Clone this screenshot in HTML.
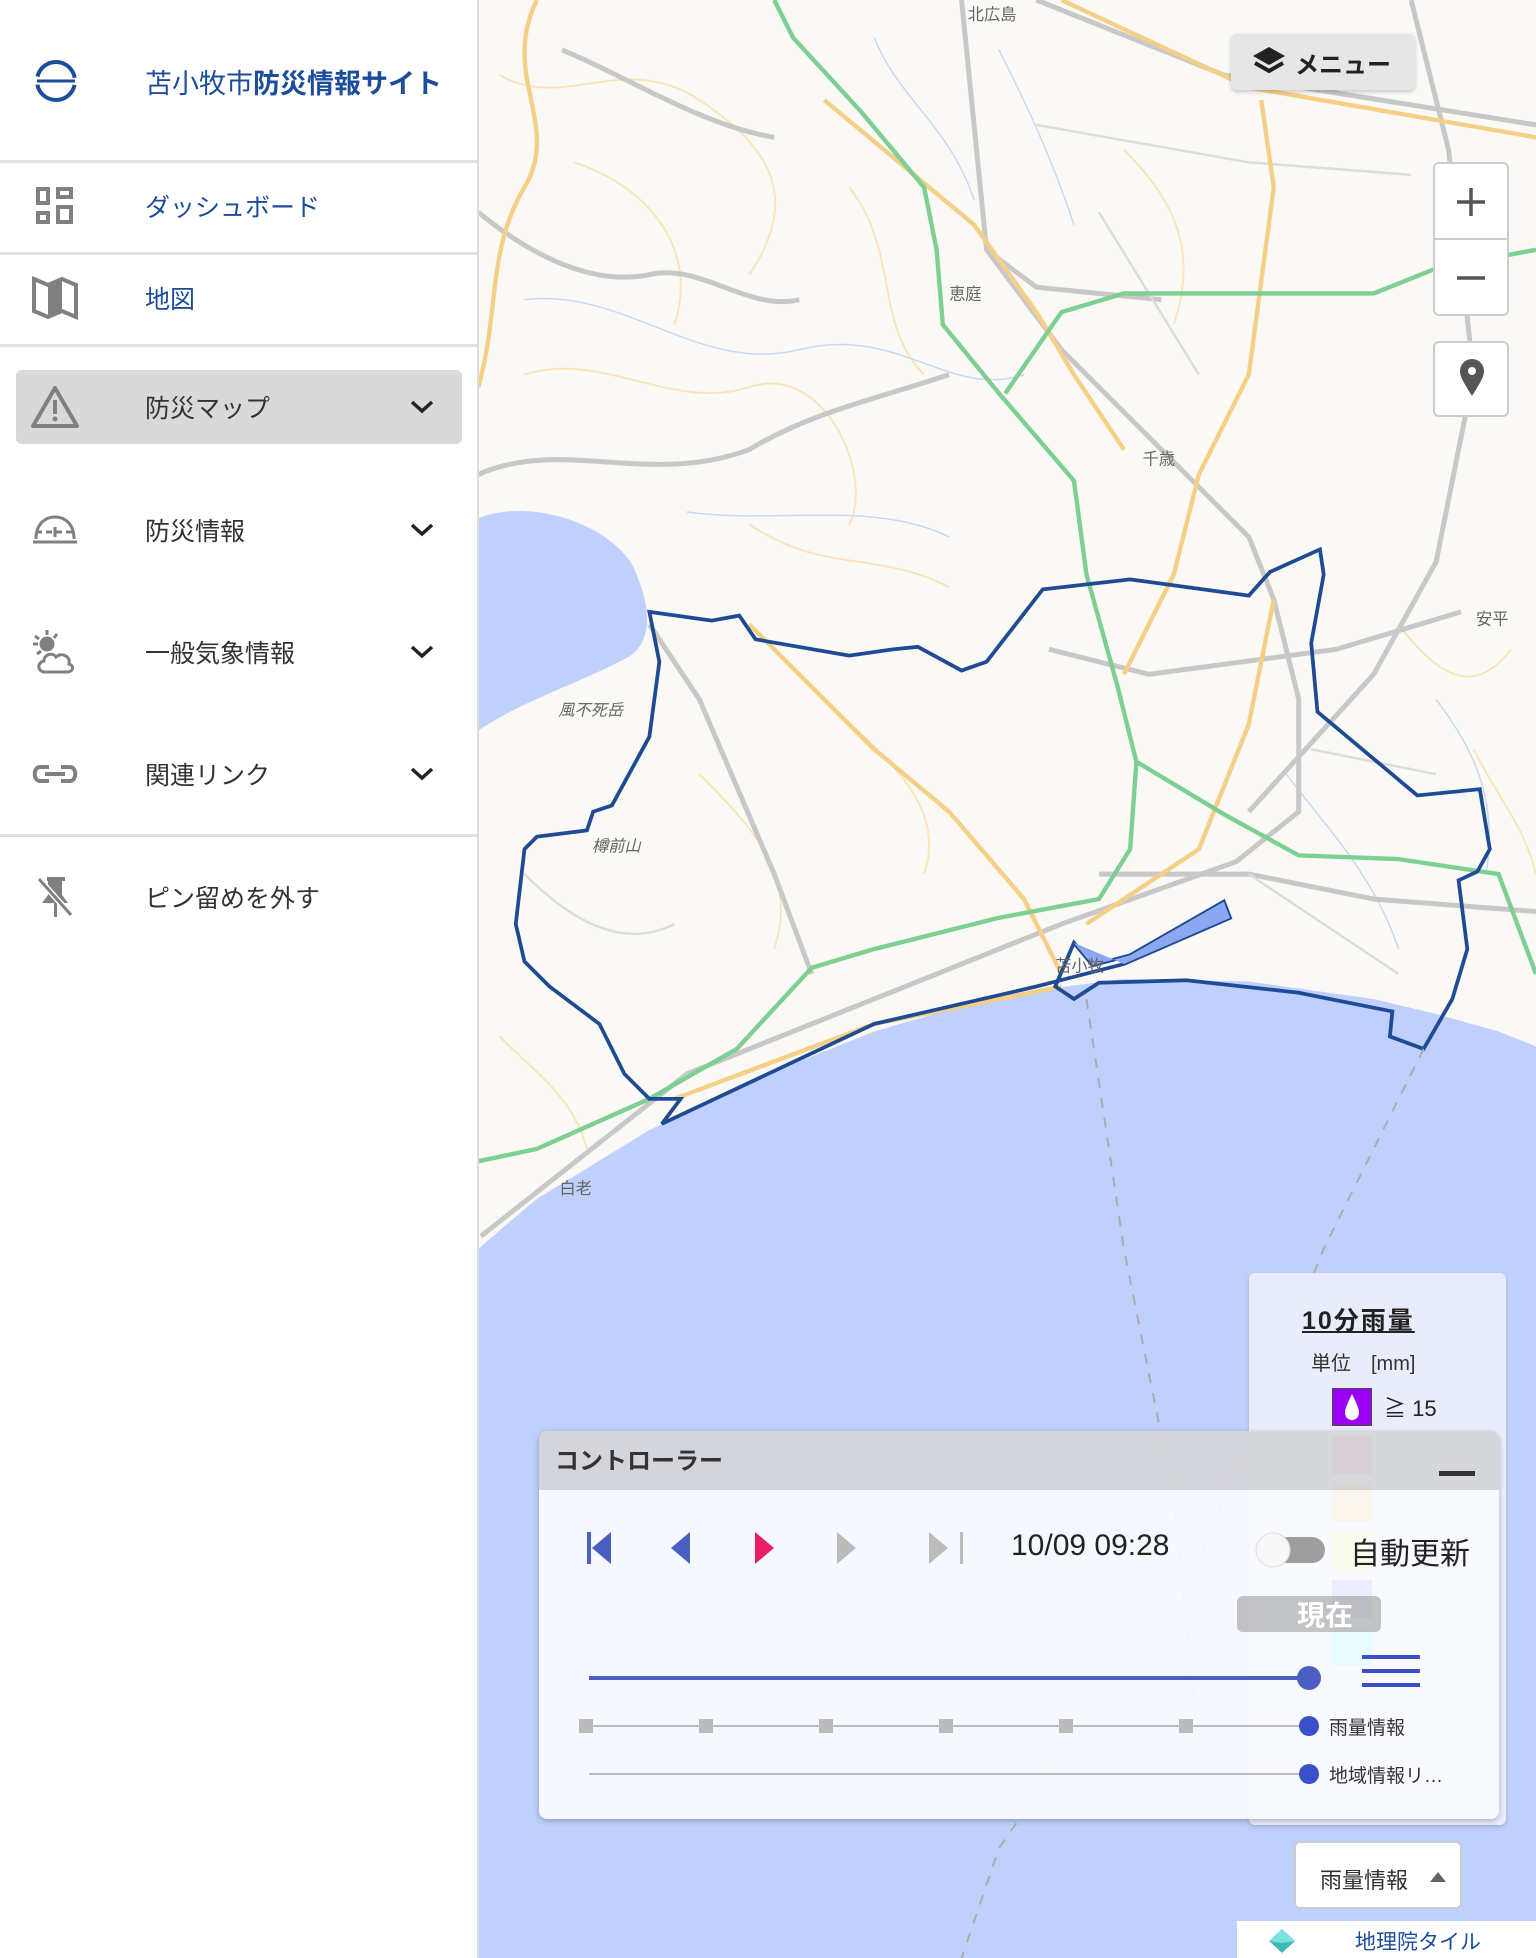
<!DOCTYPE html>
<html><head><meta charset="utf-8">
<style>
*{box-sizing:border-box;margin:0;padding:0}
body{width:1536px;height:1958px;overflow:hidden;position:relative;font-family:"Liberation Sans","Noto Sans CJK JP",sans-serif;background:#f8f7f2}
#map{position:absolute;left:0;top:0;width:1536px;height:1958px}
.side{position:absolute;left:0;top:0;width:479px;height:1958px;background:#fff;border-right:2px solid #ddd}
.hr{position:absolute;left:0;width:477px;height:3px;background:#e0e0e0}
.item{position:absolute;left:0;width:477px;height:60px;display:flex;align-items:center}
.item .ic{position:absolute;left:30px;width:50px;height:50px;display:flex;align-items:center;justify-content:center}
.item .tx{position:absolute;left:145px;font-size:25px;color:#333}
.item .chev{position:absolute;left:410px;top:22px}
.blue{color:#1c4c9c!important}
.btn{position:absolute;background:#fff;border:2px solid #ccc;border-radius:6px}
</style></head><body>
<svg id="map" viewBox="0 0 1230 1568" preserveAspectRatio="none">
<rect x="383" y="0" width="847" height="1568" fill="#faf9f5"/>
<g fill="none" stroke="#fbe3b4" stroke-width="1.5">
<path d="M400 60 C450 90 500 40 560 80 S640 160 600 220"/>
<path d="M420 300 C480 280 540 330 600 310 S700 380 680 420"/>
<path d="M560 620 C600 660 640 700 620 760"/>
<path d="M660 560 C700 600 760 640 740 700"/>
<path d="M400 830 C430 860 460 880 470 920"/>
<path d="M1120 500 C1150 540 1180 560 1210 520"/>
<path d="M1180 600 C1200 640 1220 660 1230 700"/>
<path d="M680 150 C720 200 700 260 740 300"/>
<path d="M460 130 C520 150 560 200 540 260"/>
<path d="M600 420 C660 460 700 440 760 470"/>
<path d="M900 120 C940 160 960 200 940 260"/>
</g>
<g fill="none" stroke="#c9d7f5" stroke-width="1.2">
<path d="M420 240 C500 230 560 300 640 280 S760 320 820 300"/>
<path d="M550 410 C620 420 700 400 760 430"/>
<path d="M700 30 C720 80 760 100 780 160"/>
<path d="M1150 560 C1180 600 1200 640 1190 700"/>
<path d="M800 40 C820 80 840 120 860 180"/>
<path d="M1030 620 C1060 660 1100 700 1120 760"/>
</g>
<path d="M383 415 C420 400 480 415 505 450 C520 480 525 510 505 525 C470 545 420 560 383 585 Z" fill="#bed0fb"/>
<path d="M383 1000 L430 960 L520 905 L610 862 L700 826 L800 797 L900 784 L1000 786 L1100 800 L1150 812 L1200 826 L1230 838 L1230 1568 L383 1568 Z" fill="#bed0fb"/>
<g fill="none" stroke="#c8c8c8" stroke-width="4">
<path d="M770 0 L790 200 L850 280 L920 350 L1000 430 L1020 480 L1040 560 L1040 650 L990 690 L850 740 L700 800 L550 860 L385 990"/>
<path d="M1130 0 L1160 120 L1180 300 L1150 450 L1100 540 L1000 650"/>
<path d="M1170 490 L1070 520 L920 540 L840 520"/>
<path d="M520 500 L560 560 L620 700 L650 780"/>
<path d="M383 380 C450 350 520 390 600 360 C650 330 700 320 760 300"/>
<path d="M880 700 L1000 700 L1100 720 L1230 730"/>
<path d="M830 0 L980 60 L1230 100"/>
<path d="M450 40 C500 60 560 100 620 110"/>
<path d="M383 170 C420 200 470 230 520 220 C560 210 600 250 640 240"/>
<path d="M790 200 L830 230 L930 240"/>
</g>
<g fill="none" stroke="#dcdcdc" stroke-width="2">
<path d="M830 100 L1000 130 L1130 140"/>
<path d="M880 170 L960 300"/>
<path d="M1050 600 L1150 620"/>
<path d="M1000 700 L1120 780"/>
<path d="M420 700 C460 740 500 760 540 740"/>
</g>
<g fill="none" stroke="#f5cf86" stroke-width="3.5">
<path d="M383 310 C400 250 390 200 420 150 S400 60 430 0"/>
<path d="M600 500 L700 600 L760 650 L820 720 L850 780"/>
<path d="M1010 80 L1020 150 L1000 300 L960 380 L940 460 L900 540"/>
<path d="M850 0 L1000 70 L1230 110"/>
<path d="M660 80 L720 130 L780 180 L830 250 L860 300 L900 360"/>
<path d="M1020 480 L1000 580 L960 680 L870 740"/>
<path d="M540 880 L700 820 L850 790"/>
</g>
<g fill="none" stroke="#7dcf93" stroke-width="3.5">
<path d="M620 0 L635 30 L690 90 L740 150 L750 200 L755 260 L800 315 L860 385 L870 460 L895 550 L910 610 L905 680 L880 720 L800 735 L700 760 L650 775 L590 840 L520 880 L430 920 L383 930"/>
<path d="M805 315 L850 250 L900 235 L1000 235 L1100 235 L1150 215 L1230 200"/>
<path d="M910 610 L980 652 L1040 685 L1120 688 L1200 700 L1230 780"/>
</g>
<path d="M520 490 L570 497 L592 493 L605 512 L680 525 L715 520 L735 518 L770 537 L790 530 L835 472 L905 464 L1000 477 L1017 458 L1057 440 L1060 460 L1050 515 L1055 570 L1135 637 L1185 632 L1193 680 L1183 698 L1168 705 L1175 760 L1163 800 L1140 840 L1113 830 L1115 810 L1040 795 L950 785 L880 787 L860 800 L845 790 L860 755 L875 773 L905 765 L980 722 L985 735 L900 772 L830 790 L700 820 L530 900 L545 880 L520 880 L500 860 L480 820 L440 790 L420 770 L413 740 L420 680 L430 670 L470 665 L475 650 L490 645 L520 590 L528 530 Z" fill="none" stroke="#1f4a94" stroke-width="3"/>
<path d="M860 755 L875 773 L905 765 L980 722 L985 735 L900 772 Z" fill="#8ba8f0"/>
<g fill="none" stroke="#aaa" stroke-width="1.5" stroke-dasharray="8 8">
<path d="M870 800 L900 1000 L940 1200 L960 1400"/>
<path d="M1140 840 L1060 1000 L960 1250 L800 1480 L770 1568"/>
</g>
<g font-size="13" fill="#666" font-family="Liberation Sans,Noto Sans CJK JP,sans-serif">
<text x="775" y="16">北広島</text><text x="760" y="240">恵庭</text><text x="915" y="372">千歳</text>
<text x="845" y="778">苫小牧</text><text x="448" y="956">白老</text><text x="1182" y="500">安平</text>
<text x="447" y="573" font-style="italic">風不死岳</text><text x="474" y="682" font-style="italic">樽前山</text>
</g>
</svg>

<div class="side">
  <svg style="position:absolute;left:33px;top:58px" width="46" height="46" viewBox="0 0 46 46"><circle cx="23" cy="23" r="19" fill="none" stroke="#1c4c9c" stroke-width="4" stroke-dasharray="52 8" stroke-dashoffset="-4"/><line x1="4" y1="23" x2="42" y2="23" stroke="#1c4c9c" stroke-width="3"/></svg>
  <div style="position:absolute;left:145px;top:62px;font-size:27px;color:#1c4c9c;white-space:nowrap">苫小牧市<b>防災情報サイト</b></div>
  <div class="hr" style="top:160px"></div>
  <div class="item" style="top:176px"><div class="ic"><svg width="38" height="38" viewBox="0 0 38 38" fill="none" stroke="#808080" stroke-width="4"><rect x="2" y="2" width="10" height="14"/><rect x="22" y="2" width="13" height="8"/><rect x="2" y="26" width="10" height="9"/><rect x="22" y="20" width="13" height="15"/></svg></div><div class="tx blue">ダッシュボード</div></div>
  <div class="hr" style="top:252px"></div>
  <div class="item" style="top:268px"><div class="ic"><svg width="46" height="46" viewBox="0 0 46 46"><path d="M2 4 L16 10 L30 4 L44 10 L44 42 L30 36 L16 42 L2 36 Z" fill="none" stroke="#808080" stroke-width="4"/><path d="M16 10 L30 4 L30 36 L16 42 Z" fill="#808080"/></svg></div><div class="tx blue">地図</div></div>
  <div class="hr" style="top:344px"></div>
  <div style="position:absolute;left:16px;top:370px;width:446px;height:74px;background:#d9d9d9;border-radius:6px"></div>
  <div class="item" style="top:377px"><div class="ic"><svg width="48" height="44" viewBox="0 0 48 44"><path d="M24 3 L46 41 L2 41 Z" fill="none" stroke="#808080" stroke-width="4" stroke-linejoin="round"/><rect x="22" y="15" width="4" height="14" fill="#808080"/><circle cx="24" cy="34" r="2.5" fill="#808080"/></svg></div><div class="tx">防災マップ</div><svg class="chev" width="24" height="16" viewBox="0 0 24 16"><path d="M2 3 L12 12 L22 3" fill="none" stroke="#222" stroke-width="3.5"/></svg></div>
  <div class="item" style="top:500px"><div class="ic"><svg width="48" height="30" viewBox="0 0 48 30" fill="none" stroke="#808080" stroke-width="3"><path d="M5 24 C5 8 15 2 24 2 C33 2 43 8 43 24"/><line x1="2" y1="27" x2="46" y2="27"/><line x1="5" y1="17" x2="43" y2="17" stroke-dasharray="6 4"/><line x1="24" y1="12" x2="24" y2="22"/></svg></div><div class="tx">防災情報</div><svg class="chev" width="24" height="16" viewBox="0 0 24 16"><path d="M2 3 L12 12 L22 3" fill="none" stroke="#222" stroke-width="3.5"/></svg></div>
  <div class="item" style="top:622px"><div class="ic"><svg width="48" height="48" viewBox="0 0 48 48" fill="none" stroke="#808080" stroke-width="3"><circle cx="16" cy="16" r="6" fill="#808080"/><path d="M16 2v5M4 8l4 3M2 16h5M6 26l4-3M26 6l-3 4"/><path d="M14 44 C6 44 6 34 13 33 C13 26 22 24 25 29 C30 24 40 28 38 36 C44 38 42 44 36 44 Z"/></svg></div><div class="tx">一般気象情報</div><svg class="chev" width="24" height="16" viewBox="0 0 24 16"><path d="M2 3 L12 12 L22 3" fill="none" stroke="#222" stroke-width="3.5"/></svg></div>
  <div class="item" style="top:744px"><div class="ic"><svg width="48" height="20" viewBox="0 0 48 20" fill="none" stroke="#808080" stroke-width="4"><path d="M18 3 H9 C2 3 2 17 9 17 H18"/><path d="M30 3 H39 C46 3 46 17 39 17 H30"/><line x1="14" y1="10" x2="34" y2="10"/></svg></div><div class="tx">関連リンク</div><svg class="chev" width="24" height="16" viewBox="0 0 24 16"><path d="M2 3 L12 12 L22 3" fill="none" stroke="#222" stroke-width="3.5"/></svg></div>
  <div class="hr" style="top:834px"></div>
  <div class="item" style="top:867px"><div class="ic"><svg width="40" height="44" viewBox="0 0 40 44"><path d="M12 2 H30 V6 H27 V20 L33 28 H7 L13 20 V6 H12 Z" fill="#808080"/><rect x="19" y="28" width="3" height="14" fill="#808080"/><line x1="4" y1="4" x2="36" y2="40" stroke="#fff" stroke-width="6"/><line x1="4" y1="4" x2="36" y2="40" stroke="#808080" stroke-width="3"/></svg></div><div class="tx">ピン留めを外す</div></div>
</div>

<div style="position:absolute;left:1231px;top:34px;width:184px;height:56px;background:#e6e6e6;border-radius:6px;box-shadow:0 2px 4px rgba(0,0,0,.2);display:flex;align-items:center;padding-left:20px;font-size:24px;color:#222;font-weight:bold">
<svg width="36" height="34" viewBox="0 0 36 34" style="margin-right:8px"><path d="M18 2 L34 11 L18 20 L2 11 Z" fill="#222"/><path d="M4 18 L18 26 L32 18" fill="none" stroke="#222" stroke-width="4"/></svg>メニュー</div>
<div class="btn" style="left:1433px;top:162px;width:76px;height:154px">
<div style="position:absolute;left:0;top:74px;width:72px;height:2px;background:#ccc"></div>
<svg style="position:absolute;left:20px;top:22px" width="32" height="32"><path d="M16 2V30M2 16H30" stroke="#555" stroke-width="3.5"/></svg>
<svg style="position:absolute;left:20px;top:98px" width="32" height="32"><path d="M2 16H30" stroke="#555" stroke-width="3.5"/></svg></div>
<div class="btn" style="left:1433px;top:341px;width:76px;height:76px">
<svg style="position:absolute;left:24px;top:16px" width="26" height="38" viewBox="0 0 26 38"><path d="M13 37 C5 24 1 18 1 12 A12 12 0 0 1 25 12 C25 18 21 24 13 37 Z" fill="#555"/><circle cx="13" cy="12" r="4" fill="#fff"/></svg></div>

<div style="position:absolute;left:1249px;top:1273px;width:257px;height:552px;background:#e9edfb;border-radius:6px;box-shadow:0 2px 4px rgba(0,0,0,.15)">
<div style="position:absolute;left:53px;top:28px;font-size:25px;font-weight:bold;text-decoration:underline;color:#222;letter-spacing:2px">10分雨量</div>
<div style="position:absolute;left:62px;top:74px;font-size:20px;color:#333">単位　[mm]</div>
<div style="position:absolute;left:83px;top:115px;width:40px;height:38px;background:#9b00f2;border:2px solid #6a2a9a"><svg width="36" height="34" viewBox="0 0 36 34"><path d="M18 4 C12 16 11 20 11 23 A7 7 0 0 0 25 23 C25 20 24 16 18 4 Z" fill="#fff"/></svg></div>
<div style="position:absolute;left:135px;top:118px;font-size:22px;color:#222">≧ 15</div>
<div style="position:absolute;left:83px;top:163px;width:40px;height:38px;background:#ff3a3a"></div>
<div style="position:absolute;left:83px;top:211px;width:40px;height:38px;background:#ffa500"></div>
<div style="position:absolute;left:83px;top:259px;width:40px;height:38px;background:#ffee00"></div>
<div style="position:absolute;left:83px;top:307px;width:40px;height:38px;background:#3040ff"></div>
<div style="position:absolute;left:83px;top:355px;width:40px;height:38px;background:#00ffff"></div>
</div>

<div style="position:absolute;left:539px;top:1431px;width:960px;height:388px;border-radius:8px;overflow:hidden;box-shadow:0 2px 6px rgba(0,0,0,.25)">
<div style="height:59px;background:rgba(212,213,218,.96);font-size:24px;font-weight:bold;color:#333;padding:10px 0 0 16px">コントローラー
<div style="position:absolute;right:24px;top:40px;width:36px;height:5px;background:#333"></div></div>
<div style="position:absolute;top:59px;left:0;right:0;bottom:0;background:rgba(250,251,255,.93)"></div>
<svg style="position:absolute;left:0;top:59px" width="960" height="329">
<rect x="48" y="42" width="4" height="32" fill="#4a5fc1"/><path d="M53 58 L72 42 L72 74 Z" fill="#4a5fc1"/>
<path d="M132 58 L151 42 L151 74 Z" fill="#4a5fc1"/>
<path d="M216 42 L235 58 L216 74 Z" fill="#e91e63"/>
<path d="M298 42 L317 58 L298 74 Z" fill="#bbb"/>
<path d="M390 42 L409 58 L390 74 Z" fill="#bbb"/><rect x="421" y="42" width="3" height="32" fill="#bbb"/>
<line x1="50" y1="188" x2="770" y2="188" stroke="#4a5fc1" stroke-width="4"/><circle cx="770" cy="188" r="12" fill="#4a5fc1"/>
<line x1="46" y1="236" x2="770" y2="236" stroke="#bbb" stroke-width="2"/>
<g fill="#bbb"><rect x="40" y="229" width="14" height="14"/><rect x="160" y="229" width="14" height="14"/><rect x="280" y="229" width="14" height="14"/><rect x="400" y="229" width="14" height="14"/><rect x="520" y="229" width="14" height="14"/><rect x="640" y="229" width="14" height="14"/></g>
<circle cx="770" cy="236" r="10" fill="#3b4fc9"/>
<line x1="50" y1="284" x2="770" y2="284" stroke="#bbb" stroke-width="2"/><circle cx="770" cy="284" r="10" fill="#3b4fc9"/>
<g stroke="#3b4fc9" stroke-width="4"><line x1="823" y1="167" x2="881" y2="167"/><line x1="823" y1="181" x2="881" y2="181"/><line x1="823" y1="195" x2="881" y2="195"/></g>
<rect x="732" y="47" width="54" height="26" rx="13" fill="#9e9e9e"/><circle cx="734" cy="60" r="17" fill="#f7f7f7" stroke="#ddd"/>
</svg>
<div style="position:absolute;left:472px;top:98px;font-size:30px;color:#222">10/09 09:28</div>
<div style="position:absolute;left:811px;top:98px;font-size:30px;color:#222">自動更新</div>
<div style="position:absolute;left:698px;top:165px;width:144px;height:36px;background:rgba(150,150,150,.55);border-radius:6px;color:#fff;font-size:28px;font-weight:bold;padding-left:60px;line-height:40px;overflow:hidden">現在</div>
<div style="position:absolute;left:790px;top:282px;font-size:19px;color:#333">雨量情報</div>
<div style="position:absolute;left:790px;top:330px;font-size:19px;color:#333">地域情報リ…</div>
</div>

<div class="btn" style="left:1294px;top:1841px;width:168px;height:68px;font-size:22px;color:#333;padding:20px 0 0 24px">雨量情報
<svg style="position:absolute;left:132px;top:27px" width="20" height="14"><path d="M10 2 L18 12 L2 12 Z" fill="#666"/></svg></div>
<div style="position:absolute;left:1237px;top:1921px;width:299px;height:37px;background:#fff;font-size:21px;color:#1c4c9c;padding:5px 0 0 118px">地理院タイル
<svg style="position:absolute;left:30px;top:6px" width="30" height="28"><path d="M15 2 L28 14 L15 26 L2 14 Z" fill="#3fb8b8"/><path d="M15 2 L28 14 L15 16 L2 14 Z" fill="#7fe0e0"/></svg></div>
</body></html>
